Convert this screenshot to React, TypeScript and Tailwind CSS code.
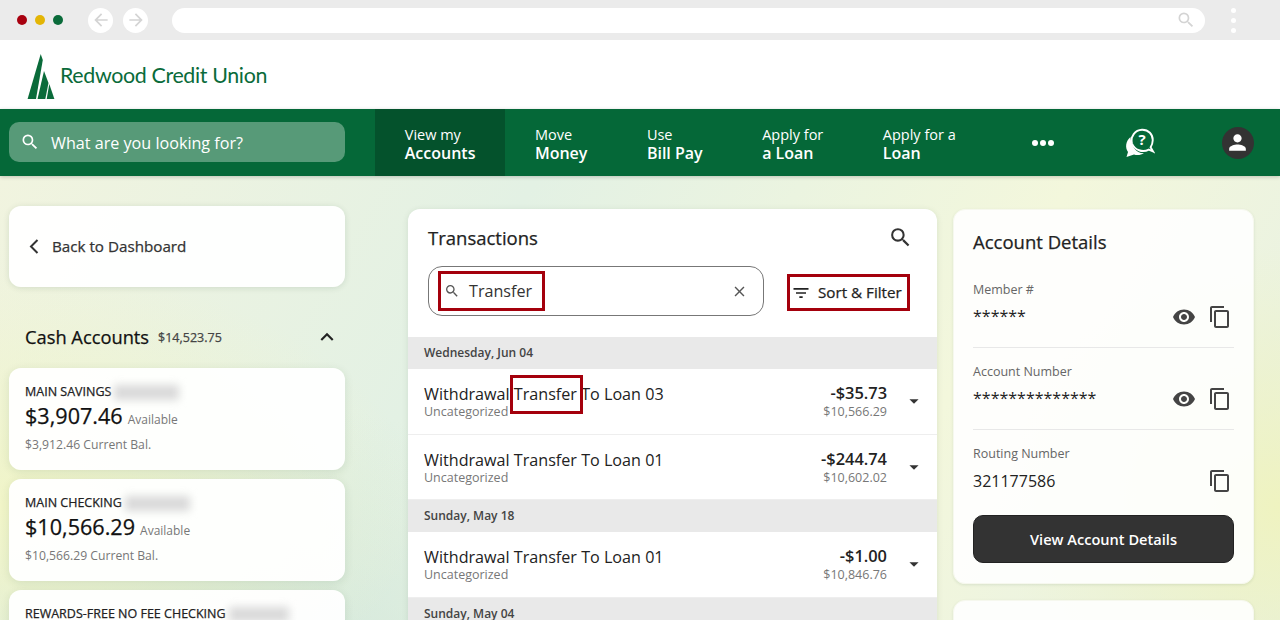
import React from "react";
import { MdSearch, MdContentCopy, MdVisibility, MdClose, MdFilterList, MdArrowDropDown, MdExpandLess, MdPerson, MdArrowBack, MdArrowForward } from "react-icons/md";

const medium = "[-webkit-text-stroke:0.25px_currentColor]";

function Tree() {
  return (
    <svg width="28" height="45" viewBox="0 0 28 45" className="shrink-0" fill="#0a6b3a">
      <polygon points="13.7,0 15.8,6 9,45 0.6,45" />
      <polygon points="17,17 21.5,29 18.3,45 10.5,45" />
      <polygon points="22.3,30 27.4,45 19.7,45" />
    </svg>
  );
}

function Help() {
  return (
    <svg width="30" height="30" viewBox="0 0 30 30">
      <path d="M5.5 9 C0.5 13 0 20 3 24 L1.5 29 L9 26.5 C12.5 27.6 16 27 19 25.3 C11 25.5 6 18 5.5 9Z" fill="#fff" />
      <path d="M28 23.5 L23.8 21.6 C17.5 25 9.5 22 7 15.5 C5.2 8.5 10 2 17 1.7 C23.5 1.5 28 6.5 27.7 12.5 C27.6 15.5 26.6 17.8 25.6 19.3Z" fill="none" stroke="#fff" strokeWidth="1.9" />
      <text x="17" y="17.3" textAnchor="middle" fontSize="15" fontWeight="700" fill="#fff" fontFamily="Open Sans, sans-serif">?</text>
    </svg>
  );
}

function Tab({ a, b, active }: { a: string; b: string; active?: boolean }) {
  return (
    <div className={`h-full px-[29.75px] pt-[2px] flex flex-col justify-center text-white ${active ? "bg-[#04522c]" : ""}`}>
      <div className="text-[14.5px] leading-[19px]">{a}</div>
      <div className="text-[16px] leading-[19px] font-semibold">{b}</div>
    </div>
  );
}

function Blur({ w }: { w: string }) {
  return <span className={`inline-block h-[15px] ${w} ml-[3px] bg-[#d9d9d9] blur-[4px]`} />;
}

function AccountCard({ name, blur, amount, cur }: { name: string; blur: string; amount: string; cur: string }) {
  return (
    <div className="h-[102px] shrink-0 rounded-xl bg-white/95 px-[16px] pt-[15px] shadow-[0_2px_10px_rgba(0,60,30,0.1)]">
      <div className={`flex items-center text-[12.5px] leading-[18px] text-[#222] ${medium}`}>{name}<Blur w={blur} /></div>
      <div className="flex items-baseline gap-[5px]">
        <span className={`text-[21.6px] leading-[30px] text-[#111] ${medium}`}>{amount}</span>
        <span className="text-[12px] text-[#777]">Available</span>
      </div>
      <div className="text-[12.2px] leading-[16px] mt-[6px] text-[#777]">{cur} Current Bal.</div>
    </div>
  );
}

function DateRow({ t }: { t: string }) {
  return <div className="h-8 shrink-0 bg-[#e9e9e9] pl-4 flex items-center text-[12px] font-semibold text-[#444]">{t}</div>;
}

function Tx({ t, amt, bal, mark }: { t: string; amt: string; bal: string; mark?: boolean }) {
  return (
    <div className="h-[65.5px] shrink-0 border-b border-[#eeeeee] flex items-center pl-4 pr-[12px]">
      <div className="flex-1 mt-[2px]">
        <div className="text-[16.15px] leading-[20px] text-[#222]">
          {mark ? (
            <>
              Withdrawal{" "}
              <span className="relative">
                Transfer
                <span className="absolute -left-[4px] -right-[6px] -top-[8px] -bottom-[9px] border-[3px] border-[#a4000c]" />
              </span>{" "}
              To Loan 03
            </>
          ) : (
            t
          )}
        </div>
        <div className="text-[12.5px] leading-[16px] text-[#777]">Uncategorized</div>
      </div>
      <div className="text-right mr-[16px] mt-[2px]">
        <div className="text-[16.4px] leading-[20px] font-semibold text-[#222]">{amt}</div>
        <div className="text-[12.5px] leading-[18px] text-[#777]">{bal}</div>
      </div>
      <MdArrowDropDown className="text-[#333] text-[22px]" />
    </div>
  );
}

function Detail({ label, value, eye, big, line }: { label: string; value: string; eye?: boolean; big?: boolean; line?: boolean }) {
  return (
    <div className={`h-[82px] shrink-0 pt-[15px] ${line ? "border-b border-[#e8e8e8]" : ""}`}>
      <div className="text-[12.5px] leading-[18px] text-[#666]">{label}</div>
      <div className="flex items-center h-[38px] -mt-[1px] pr-[2px]">
        <div className={`flex-1 text-[#222] ${big ? "text-[16px] -mt-[1px]" : "text-[16px] -mt-[2px]"}`}>{value}</div>
        {eye && <MdVisibility className="text-[#444] text-[24px] mr-[12px]" />}
        <MdContentCopy className="text-[#444] text-[24px]" />
      </div>
    </div>
  );
}

export default function App() {
  return (
    <div className="h-[620px] w-[1280px] overflow-hidden flex flex-col font-['Open_Sans',sans-serif] bg-white">
      <div className="h-10 shrink-0 bg-[#ebebeb] flex items-center pl-[17px]">
        <span className="w-[10px] h-[10px] rounded-full bg-[#a8000f]" />
        <span className="w-[10px] h-[10px] rounded-full bg-[#e3b505] ml-2" />
        <span className="w-[10px] h-[10px] rounded-full bg-[#0a6b3a] ml-2" />
        <span className="w-[25px] h-[25px] rounded-full bg-white ml-[25px] flex items-center justify-center"><MdArrowBack className="text-[#d4d4d4] text-[20px]" /></span>
        <span className="w-[25px] h-[25px] rounded-full bg-white ml-[10px] flex items-center justify-center"><MdArrowForward className="text-[#d4d4d4] text-[20px]" /></span>
        <div className="w-[1033px] h-[25px] rounded-full bg-white ml-[24px] flex items-center justify-end pr-[9px]"><MdSearch className="text-[#d4d4d4] text-[20px]" /></div>
        <div className="ml-[26px] flex flex-col gap-[5px]">
          <span className="w-[5px] h-[5px] rounded-full bg-white" />
          <span className="w-[5px] h-[5px] rounded-full bg-white" />
          <span className="w-[5px] h-[5px] rounded-full bg-white" />
        </div>
      </div>
      <div className="h-[69px] shrink-0 bg-white flex items-start pl-[27px] pt-[14px]">
        <Tree />
        <span className="ml-[5px] mt-[7px] font-['Lato',sans-serif] text-[21.4px] leading-[28px] tracking-[-0.35px] text-[#0a6b3a]">Redwood Credit Union</span>
      </div>
      <div className="h-[67px] shrink-0 bg-[#056838] flex items-center shadow-[0_1px_4px_rgba(0,0,0,0.2)] relative z-10">
        <div className="w-[336px] h-10 ml-[9px] mr-[30px] mb-[2px] rounded-[10px] bg-[#579a78] flex items-center pl-[11px] text-white">
          <MdSearch className="text-[20px] mr-[11px] mt-[1px]" />
          <span className="text-[16.15px] mt-[3px]">What are you looking for?</span>
        </div>
        <Tab a="View my" b="Accounts" active />
        <Tab a="Move" b="Money" />
        <Tab a="Use" b="Bill Pay" />
        <Tab a="Apply for" b="a Loan" />
        <Tab a="Apply for a" b="Loan" />
        <div className="ml-[46px] flex gap-[2px]">
          <span className="w-[6px] h-[6px] rounded-full bg-white" />
          <span className="w-[6px] h-[6px] rounded-full bg-white" />
          <span className="w-[6px] h-[6px] rounded-full bg-white" />
        </div>
        <div className="ml-[71px]"><Help /></div>
        <div className="ml-[67px] w-8 h-8 rounded-full bg-[#333] flex items-center justify-center"><MdPerson className="text-white text-[25px]" /></div>
      </div>
      <div className="flex-1 min-h-0 overflow-hidden flex items-start px-[9px] bg-[radial-gradient(ellipse_420px_240px_at_0px_330px,#f1f5c8_0%,transparent_100%),radial-gradient(ellipse_280px_260px_at_100%_330px,#eff3c0_0%,transparent_100%),radial-gradient(ellipse_500px_300px_at_200px_520px,#d0e6da_0%,transparent_100%),linear-gradient(120deg,#f1f4df_0%,#e3f1e4_35%,#f3f7dc_70%,#e6f0e4_100%)]">
        <div className="w-[336px] shrink-0 pt-[30px] flex flex-col">
          <div className="h-[81px] shrink-0 rounded-xl bg-white/95 flex items-center pl-[20px] shadow-[0_1px_6px_rgba(0,60,30,0.12)]">
            <svg width="10" height="15" viewBox="0 0 10 15" fill="none" stroke="#333" strokeWidth="2"><polyline points="8.5,1 2,7.5 8.5,14" /></svg>
            <span className={`ml-[13px] text-[15.2px] text-[#333] ${medium}`}>Back to Dashboard</span>
          </div>
          <div className="h-[81px] shrink-0 flex items-center pl-[16px] pr-[5px] pt-[18px]">
            <span className={`text-[18.3px] text-[#111] ${medium}`}>Cash Accounts</span>
            <span className={`ml-[9px] mt-[3px] text-[12.5px] text-[#444] flex-1 ${medium}`}>$14,523.75</span>
            <MdExpandLess className="text-[#222] text-[26px]" />
          </div>
          <div className="flex flex-col gap-[9px]">
            <AccountCard name="MAIN SAVINGS" blur="w-[65px]" amount="$3,907.46" cur="$3,912.46" />
            <AccountCard name="MAIN CHECKING" blur="w-[65px]" amount="$10,566.29" cur="$10,566.29" />
            <AccountCard name="REWARDS-FREE NO FEE CHECKING" blur="w-[60px]" amount="$52.00" cur="$52.00" />
          </div>
        </div>
        <div className="w-[529px] shrink-0 ml-[63px] mt-[33px] rounded-t-xl bg-white flex flex-col shadow-[0_1px_6px_rgba(0,60,30,0.1)]">
          <div className="h-[128px] shrink-0 px-5 pt-[16px]">
            <div className="flex items-center justify-between h-[26px] pr-[4px]">
              <span className={`text-[18.5px] text-[#222] ${medium}`}>Transactions</span>
              <MdSearch className="text-[#333] text-[25px] -mt-[2px]" />
            </div>
            <div className="flex items-center mt-[15px]">
              <div className="relative w-[336px] h-[50px] rounded-[14px] border border-[#777] flex items-center pl-[15px] pr-[15px]">
                <MdSearch className="text-[#555] text-[16px] mr-[9px]" />
                <span className="flex-1 text-[16.15px] text-[#333]">Transfer</span>
                <MdClose className="text-[#555] text-[17px]" />
                <span className="absolute left-[9px] top-[4px] w-[107px] h-[40px] border-[3px] border-[#a4000c]" />
              </div>
              <div className="relative ml-[23px] mt-[3px] w-[123px] h-[37px] flex items-center pl-[4px]">
                <MdFilterList className="text-[#222] text-[20px]" />
                <span className={`ml-[7px] text-[15.2px] text-[#222] whitespace-nowrap ${medium}`}>Sort &amp; Filter</span>
                <span className="absolute inset-0 border-[3px] border-[#a4000c]" />
              </div>
            </div>
          </div>
          <DateRow t="Wednesday, Jun 04" />
          <Tx t="" mark amt="-$35.73" bal="$10,566.29" />
          <Tx t="Withdrawal Transfer To Loan 01" amt="-$244.74" bal="$10,602.02" />
          <DateRow t="Sunday, May 18" />
          <Tx t="Withdrawal Transfer To Loan 01" amt="-$1.00" bal="$10,846.76" />
          <DateRow t="Sunday, May 04" />
        </div>
        <div className="w-[301px] shrink-0 ml-[16px] mt-[33px] flex flex-col gap-[16px]">
          <div className="h-[375px] shrink-0 rounded-xl bg-white/90 bg-clip-border px-[19px] pt-[19px] border border-[#f6f8ee] shadow-[0_1px_3px_rgba(0,60,30,0.1)]">
            <div className={`text-[18.5px] leading-[25px] text-[#222] mb-[12px] ${medium}`}>Account Details</div>
            <Detail label="Member #" value="******" eye line />
            <Detail label="Account Number" value="**************" eye line />
            <Detail label="Routing Number" value="321177586" big />
            <div className="h-[48px] mt-[3px] pt-[2px] rounded-[10px] bg-[#333] border border-[#222] flex items-center justify-center text-white text-[14.6px] font-semibold">View Account Details</div>
          </div>
          <div className="h-[100px] shrink-0 rounded-xl bg-white/90 border border-[#f6f8ee] shadow-[0_1px_3px_rgba(0,60,30,0.1)]" />
        </div>
      </div>
    </div>
  );
}
